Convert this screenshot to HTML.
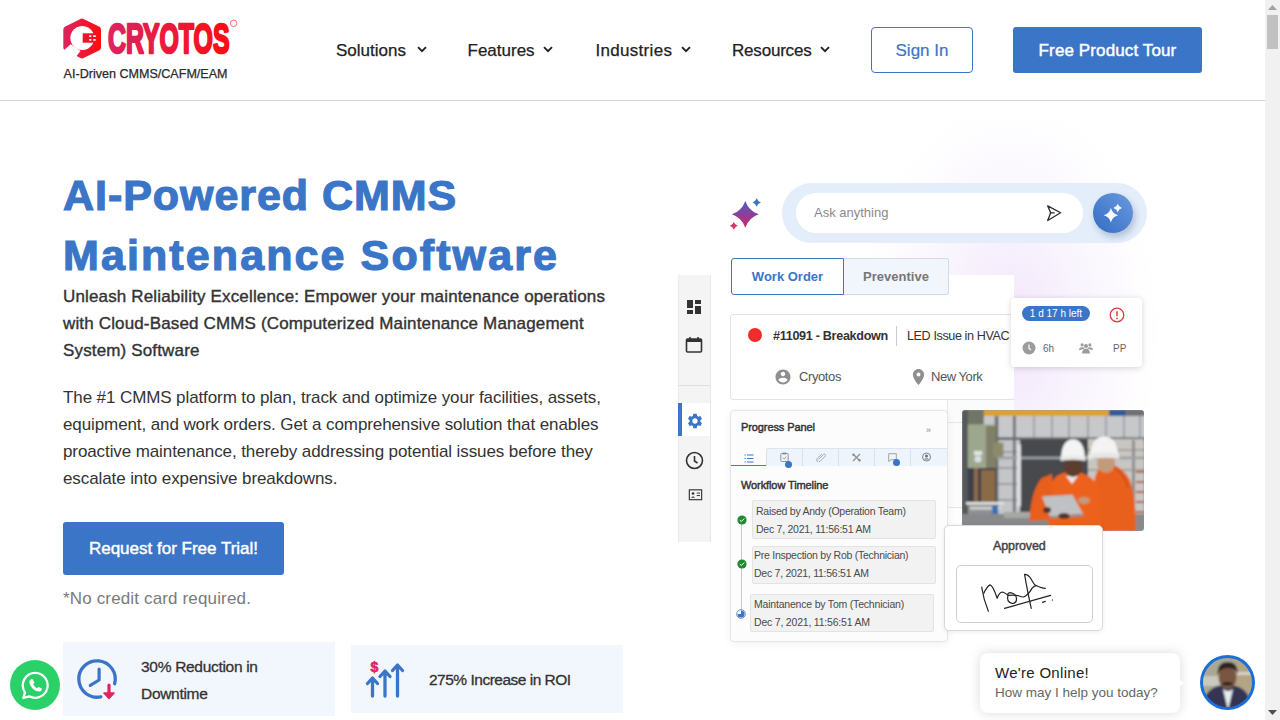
<!DOCTYPE html>
<html><head><meta charset="utf-8">
<style>
*{margin:0;padding:0;box-sizing:border-box}
html,body{width:1280px;height:720px;overflow:hidden;background:#fff;font-family:"Liberation Sans",sans-serif;color:#222}
.a{position:absolute;white-space:nowrap}
#hdr{position:absolute;left:0;top:0;width:1265px;height:101px;border-bottom:1px solid #d4d4d4;background:#fff}
.nav{position:absolute;top:40px;font-size:17px;color:#222;line-height:20px;-webkit-text-stroke:0.25px #222}
.chev{display:inline-block;width:7px;height:7px;border-right:2px solid #333;border-bottom:2px solid #333;transform:rotate(45deg);margin-left:11px;position:relative;top:-4px}
.sb{position:absolute;left:1265px;top:0;width:15px;height:720px;background:#f1f1f1}
</style></head><body>
<div id="hdr">
  <!-- logo -->
  <svg class="a" style="left:58px;top:14px" width="190" height="70" viewBox="0 0 190 70">
    <defs><linearGradient id="lg" x1="0" x2="1"><stop offset="0" stop-color="#dd2461"/><stop offset="1" stop-color="#fb0d12"/></linearGradient>
    <linearGradient id="lg2" gradientUnits="userSpaceOnUse" x1="49" x2="172"><stop offset="0" stop-color="#dd2461"/><stop offset="1" stop-color="#fb0d12"/></linearGradient></defs>
    <path fill="url(#lg)" fill-rule="evenodd" d="M22 5.2 Q24 4 26 5.2 L41.5 12.8 Q43 13.7 43 15.5 L43 33.5 Q43 35.3 41.5 36.2 L26 43.8 Q24 45 22 43.8 L6.8 36.2 Q5.3 35.3 5.3 33.5 L5.3 15.5 Q5.3 13.7 6.8 12.8 Z M24.3 12 A12 12 0 1 0 24.31 12 Z"/>
    <path d="M5 37 L12.7 30.2 L22.5 37 L17.5 43.5 Z" fill="#fff"/>
    <rect x="24.7" y="19.3" width="13.6" height="9.4" fill="#f2112a"/>
    <path d="M31.3 21.3h2v1.7h-2zM35.3 21.3h2.4v1.7h-2.4zM31.3 25h2v1.7h-2zM35.3 25h2.4v1.7h-2.4z" fill="#fff"/>
    <text x="50" y="39.2" font-family="Liberation Sans" font-weight="bold" font-size="43" fill="url(#lg2)" stroke="url(#lg2)" stroke-width="2.6" stroke-linejoin="round" textLength="121.5" lengthAdjust="spacingAndGlyphs">CRYOTOS</text>
    <circle cx="175.6" cy="9.3" r="3.2" fill="none" stroke="#f44" stroke-width="0.8"/>
    <text x="5.6" y="63.5" font-family="Liberation Sans" font-size="12.3" fill="#2a2a2a" stroke="#2a2a2a" stroke-width="0.25" textLength="164" lengthAdjust="spacingAndGlyphs">AI-Driven CMMS/CAFM/EAM</text>
  </svg>
  <div class="nav" style="left:336px;top:41px;letter-spacing:0px">Solutions</div>
  <svg class="a" style="left:416.5px;top:46px" width="10" height="7" viewBox="0 0 10 7"><path d="M1 1.2 L5 5.2 L9 1.2" fill="none" stroke="#222" stroke-width="1.9"/></svg>
  <div class="nav" style="left:467.5px;top:41px;letter-spacing:0px">Features</div>
  <svg class="a" style="left:542.5px;top:46px" width="10" height="7" viewBox="0 0 10 7"><path d="M1 1.2 L5 5.2 L9 1.2" fill="none" stroke="#222" stroke-width="1.9"/></svg>
  <div class="nav" style="left:595.5px;top:41px;letter-spacing:0.3px">Industries</div>
  <svg class="a" style="left:681px;top:46px" width="10" height="7" viewBox="0 0 10 7"><path d="M1 1.2 L5 5.2 L9 1.2" fill="none" stroke="#222" stroke-width="1.9"/></svg>
  <div class="nav" style="left:732px;top:41px;letter-spacing:-0.2px">Resources</div>
  <svg class="a" style="left:820px;top:46px" width="10" height="7" viewBox="0 0 10 7"><path d="M1 1.2 L5 5.2 L9 1.2" fill="none" stroke="#222" stroke-width="1.9"/></svg>
    <div class="a" style="left:871px;top:27px;width:102px;height:46px;border:1px solid #3b75c7;border-radius:4px;color:#3b75c7;font-size:17px;text-align:center;line-height:46px;-webkit-text-stroke:0.2px #3b75c7">Sign In</div>
  <div class="a" style="left:1013px;top:27px;width:189px;height:46px;background:#3b75c7;border-radius:3px;color:#fff;font-size:17px;text-align:center;line-height:48px;letter-spacing:0.12px;-webkit-text-stroke:0.45px #fff">Free Product Tour</div>
</div>

<!-- hero left -->
<div class="a" style="left:63px;top:165px;font-size:43px;font-weight:bold;color:#3b75c7;line-height:60px;-webkit-text-stroke:1.2px #3b75c7"><span style="letter-spacing:0.95px">AI-Powered CMMS</span><br><span style="letter-spacing:2.1px">Maintenance Software</span></div>
<div class="a" style="left:63px;top:283px;font-size:17px;font-weight:normal;color:#333;line-height:27px;letter-spacing:0.15px;-webkit-text-stroke:0.38px #333">Unleash Reliability Excellence: Empower your maintenance operations<br>with Cloud-Based CMMS (Computerized Maintenance Management<br>System) Software</div>
<div class="a" style="left:63px;top:384px;font-size:17px;color:#333;line-height:27px;letter-spacing:-0.1px">The #1 CMMS platform to plan, track and optimize your facilities, assets,<br>equipment, and work orders. Get a comprehensive solution that enables<br>proactive maintenance, thereby addressing potential issues before they<br>escalate into expensive breakdowns.</div>
<div class="a" style="left:63px;top:522px;width:221px;height:53px;background:#3b75c7;border-radius:3px;color:#fff;font-size:17px;text-align:center;line-height:53px;-webkit-text-stroke:0.45px #fff">Request for Free Trial!</div>
<div class="a" style="left:63px;top:589px;font-size:17px;color:#7a7a7a;line-height:20px;letter-spacing:0.15px">*No credit card required.</div>


<!-- illustration -->
<div class="a" style="left:820px;top:120px;width:380px;height:460px;background:radial-gradient(ellipse 150px 230px at 50% 46%, rgba(240,224,250,0.85) 0%, rgba(244,236,252,0.55) 50%, rgba(255,255,255,0) 100%)"></div>
<!-- sparkle -->
<svg class="a" style="left:727px;top:195px" width="38" height="38" viewBox="0 0 38 38">
  <defs><linearGradient id="sg" x1="0" y1="0" x2="0" y2="1"><stop offset="0" stop-color="#4d5cc0"/><stop offset="0.5" stop-color="#8a3f9c"/><stop offset="1" stop-color="#d5285f"/></linearGradient></defs>
  <path d="M18.3 5.9 Q21.784000000000002 15.816 31.700000000000003 19.3 Q21.784000000000002 22.784000000000002 18.3 32.7 Q14.816 22.784000000000002 4.9 19.3 Q14.816 15.816 18.3 5.9Z" fill="url(#sg)"/>
  <path d="M29.7 3.3 Q30.791999999999998 6.4079999999999995 33.9 7.5 Q30.791999999999998 8.592 29.7 11.7 Q28.608 8.592 25.5 7.5 Q28.608 6.4079999999999995 29.7 3.3Z" fill="#3f73c8"/>
  <path d="M6.8 26.900000000000002 Q7.814 29.786 10.7 30.8 Q7.814 31.814 6.8 34.7 Q5.786 31.814 2.9 30.8 Q5.786 29.786 6.8 26.900000000000002Z" fill="#d8336a"/>
</svg>
<!-- ask pill -->
<div class="a" style="left:782px;top:183px;width:365px;height:60px;border-radius:30px;background:#e4eefb"></div>
<div class="a" style="left:796px;top:193px;width:287px;height:40px;border-radius:20px;background:#fff"></div>
<div class="a" style="left:814px;top:205px;font-size:13px;color:#8a8a8a;line-height:16px">Ask anything</div>
<svg class="a" style="left:1044px;top:204px" width="19" height="18" viewBox="0 0 19 18"><path d="M3.7 1.9 L16.6 8.8 L3.7 16.5 L6.7 8.8 Z M6.7 8.8 L10.2 8.8" fill="none" stroke="#2a2a2a" stroke-width="1.3" stroke-linejoin="round" stroke-linecap="round"/></svg>
<div class="a" style="left:1093px;top:193px;width:40px;height:40px;border-radius:50%;background:linear-gradient(45deg,#356cc2,#6a9ae0);box-shadow:2px 4px 7px rgba(40,60,120,.28)"></div>
<svg class="a" style="left:1093px;top:193px" width="40" height="40" viewBox="0 0 40 40">
  <path d="M17.9 15.100000000000001 Q19.483999999999998 20.716 25.099999999999998 22.3 Q19.483999999999998 23.884 17.9 29.5 Q16.316 23.884 10.7 22.3 Q16.316 20.716 17.9 15.100000000000001Z" fill="#fff"/>
  <path d="M24.7 10.8 Q25.624 14.076 28.9 15 Q25.624 15.924 24.7 19.2 Q23.776 15.924 20.5 15 Q23.776 14.076 24.7 10.8Z" fill="#fff"/>
</svg>

<!-- sidebar -->
<div class="a" style="left:678px;top:275px;width:33px;height:267px;background:#f4f4f4;border-right:1px solid #e6e6e6;border-left:1px solid #ececec"></div>
<div class="a" style="left:678px;top:385px;width:32px;height:1px;background:#dedede"></div>
<div class="a" style="left:678px;top:403px;width:32px;height:33px;background:#fff"></div>
<div class="a" style="left:678px;top:403px;width:4px;height:33px;background:#3b75c7"></div>
<svg class="a" style="left:686px;top:299px" width="16" height="16" viewBox="0 0 16 16"><path d="M1 1h6v8H1zM9 1h6v4H9zM9 7h6v8H9zM1 11h6v4H1z" fill="#333"/></svg>
<svg class="a" style="left:685px;top:336px" width="18" height="18" viewBox="0 0 18 18"><rect x="1.5" y="3" width="15" height="13" rx="1" fill="none" stroke="#333" stroke-width="1.6"/><rect x="1.5" y="3" width="15" height="3" fill="#333"/><path d="M5 1v3M13 1v3" stroke="#333" stroke-width="1.6"/></svg>
<svg class="a" style="left:686px;top:412px" width="18" height="18" viewBox="0 0 24 24"><path fill="#3b75c7" d="M19.14 12.94c.04-.3.06-.61.06-.94 0-.32-.02-.64-.07-.94l2.03-1.58a.49.49 0 0 0 .12-.61l-1.92-3.32a.488.488 0 0 0-.59-.22l-2.39.96c-.5-.38-1.03-.7-1.62-.94l-.36-2.54a.484.484 0 0 0-.48-.41h-3.84c-.24 0-.43.17-.47.41l-.36 2.54c-.59.24-1.13.57-1.62.94l-2.39-.96c-.22-.08-.47 0-.59.22L2.74 8.87c-.12.21-.08.47.12.61l2.03 1.58c-.05.3-.09.63-.09.94s.02.64.07.94l-2.03 1.58a.49.49 0 0 0-.12.61l1.92 3.32c.12.22.37.29.59.22l2.39-.96c.5.38 1.03.7 1.62.94l.36 2.54c.05.24.24.41.48.41h3.84c.24 0 .44-.17.47-.41l.36-2.54c.59-.24 1.13-.56 1.62-.94l2.39.96c.22.08.47 0 .59-.22l1.92-3.32c.12-.22.07-.47-.12-.61l-2.01-1.58zM12 15.6c-1.98 0-3.6-1.62-3.6-3.6s1.62-3.6 3.6-3.6 3.6 1.62 3.6 3.6-1.62 3.6-3.6 3.6z"/></svg>
<svg class="a" style="left:685px;top:451px" width="19" height="19" viewBox="0 0 19 19"><circle cx="9.5" cy="9.5" r="8" fill="none" stroke="#333" stroke-width="1.6"/><path d="M9.5 5v5l3 2" fill="none" stroke="#333" stroke-width="1.6"/></svg>
<svg class="a" style="left:688px;top:489px" width="15" height="11.5" viewBox="0 0 17 14"><rect x="1" y="1" width="15" height="12" fill="none" stroke="#333" stroke-width="1.4"/><circle cx="5.5" cy="5.5" r="1.6" fill="#333"/><path d="M3 10.5q2.5-3 5 0z" fill="#333"/><path d="M10 5h4M10 8h4" stroke="#333" stroke-width="1.2"/></svg>

<!-- white panel behind -->
<div class="a" style="left:711px;top:275px;width:303px;height:140px;background:#fff"></div>
<!-- tabs -->
<div class="a" style="left:731px;top:258px;width:113px;height:37px;border:1px solid #3b75c7;border-radius:3px 0 0 3px;background:#fff;color:#3b75c7;font-size:13px;font-weight:bold;text-align:center;line-height:35px">Work Order</div>
<div class="a" style="left:844px;top:258px;width:105px;height:37px;border:1px solid #d3dbe7;border-left:none;border-radius:0 3px 3px 0;background:#f1f6fd;color:#777;font-size:13px;font-weight:bold;text-align:center;line-height:35px">Preventive</div>
<!-- work order card -->
<div class="a" style="left:730px;top:314px;width:284px;height:86px;border:1px solid #e3e3e3;border-right:none;border-radius:4px 0 0 4px;background:#fff"></div>
<div class="a" style="left:748px;top:328px;width:14px;height:14px;border-radius:50%;background:#f02b2b"></div>
<div class="a" style="left:773px;top:328px;font-size:12.6px;font-weight:bold;color:#333;line-height:16px;letter-spacing:-0.3px">#11091 - Breakdown</div>
<div class="a" style="left:896px;top:326px;width:1px;height:20px;background:#ccc"></div>
<div class="a" style="left:907px;top:328px;font-size:12.6px;color:#333;line-height:16px;letter-spacing:-0.4px">LED Issue in HVAC</div>
<svg class="a" style="left:774px;top:368px" width="18" height="18" viewBox="0 0 24 24"><path fill="#8f8f8f" d="M12 2C6.48 2 2 6.48 2 12s4.48 10 10 10 10-4.48 10-10S17.52 2 12 2zm0 3c1.66 0 3 1.34 3 3s-1.34 3-3 3-3-1.34-3-3 1.34-3 3-3zm0 14.2c-2.5 0-4.71-1.28-6-3.22.03-1.99 4-3.08 6-3.08 1.99 0 5.97 1.09 6 3.08-1.29 1.94-3.5 3.22-6 3.22z"/></svg>
<div class="a" style="left:799px;top:369px;font-size:13px;color:#555;line-height:16px;letter-spacing:-0.4px">Cryotos</div>
<svg class="a" style="left:911px;top:368px" width="15" height="18" viewBox="0 0 24 28"><path fill="#8f8f8f" d="M12 1C7.03 1 3 5.03 3 10c0 6.75 9 17 9 17s9-10.25 9-17c0-4.97-4.03-9-9-9zm0 12.2a3.2 3.2 0 1 1 0-6.4 3.2 3.2 0 0 1 0 6.4z"/></svg>
<div class="a" style="left:931px;top:369px;font-size:13px;color:#555;line-height:16px;letter-spacing:-0.45px">New York</div>

<!-- tooltip -->
<div class="a" style="left:1011px;top:298px;width:131px;height:69px;background:#fff;border-radius:4px;box-shadow:0 1px 6px rgba(0,0,0,.16)"></div>
<div class="a" style="left:1022px;top:306px;width:68px;height:15px;border-radius:8px;background:#3b75c7;color:#fff;font-size:10px;text-align:center;line-height:15px">1 d 17 h left</div>
<svg class="a" style="left:1109px;top:307px" width="16" height="16" viewBox="0 0 16 16"><circle cx="8" cy="8" r="6.8" fill="none" stroke="#e23a3a" stroke-width="1.3"/><path d="M8 4.2v5" stroke="#e23a3a" stroke-width="1.5"/><circle cx="8" cy="11.3" r=".9" fill="#e23a3a"/></svg>
<svg class="a" style="left:1022px;top:341px" width="14" height="14" viewBox="0 0 14 14"><circle cx="7" cy="7" r="6.5" fill="#9c9c9c"/><path d="M7 3.5v4l2 1.5" stroke="#fff" stroke-width="1.2" fill="none"/></svg>
<div class="a" style="left:1043px;top:343px;font-size:10px;color:#666;line-height:12px">6h</div>
<svg class="a" style="left:1079px;top:341px" width="14" height="14" viewBox="0 0 18 14"><circle cx="4" cy="3" r="2" fill="#9c9c9c"/><circle cx="14" cy="3" r="2" fill="#9c9c9c"/><circle cx="9" cy="4.5" r="2.6" fill="#9c9c9c"/><path d="M0 10q0-4 4-4t3 2zM18 10q0-4-4-4t-3 2zM4 14q0-6 5-6t5 6z" fill="#9c9c9c"/></svg>
<div class="a" style="left:1113px;top:343px;font-size:10px;color:#666;line-height:12px">PP</div>

<!-- progress panel -->
<div class="a" style="left:947px;top:400px;width:67px;height:108px;background:#fbfbfb;border-left:1px solid #e8e8e8;border-bottom:1px solid #e4e4e4"></div>
<div class="a" style="left:948px;top:422px;width:14px;height:1px;background:#e6e6e6"></div>
<div class="a" style="left:730px;top:410px;width:218px;height:232px;background:#fdfcfd;border:1px solid #e6e6e6;border-radius:4px;box-shadow:0 2px 8px rgba(0,0,0,.06)"></div>
<div class="a" style="left:741px;top:421px;font-size:11px;font-weight:normal;color:#333;line-height:13px;letter-spacing:-0.1px;-webkit-text-stroke:0.45px #333">Progress Panel</div>
<div class="a" style="left:926px;top:424px;font-size:9px;color:#888;line-height:12px">&#187;</div>
<div class="a" style="left:731px;top:448px;width:216px;height:18px;background:#eef4fb;border-top:1px solid #dbe5f2"></div>
<div class="a" style="left:731px;top:448px;width:36px;height:18px;background:#fdfcfd;border-bottom:1.5px solid #4a7bbd"></div>
<div class="a" style="left:766px;top:449px;width:1px;height:17px;background:#d8e0ea"></div>
<div class="a" style="left:802px;top:449px;width:1px;height:17px;background:#d8e0ea"></div>
<div class="a" style="left:838px;top:449px;width:1px;height:17px;background:#d8e0ea"></div>
<div class="a" style="left:874px;top:449px;width:1px;height:17px;background:#d8e0ea"></div>
<div class="a" style="left:910px;top:449px;width:1px;height:17px;background:#d8e0ea"></div>
<svg class="a" style="left:744px;top:454px" width="10" height="9" viewBox="0 0 10 9"><path d="M0.5 1h1.3M0.5 4.5h1.3M0.5 8h1.3M3 1h6.5M3 4.5h6.5M3 8h6.5" stroke="#3b75c7" stroke-width="1.1"/></svg>
<svg class="a" style="left:780px;top:452px" width="9" height="10" viewBox="0 0 9 10"><rect x="0.8" y="1.5" width="7.4" height="8" rx="0.8" fill="none" stroke="#8a8a8a" stroke-width="0.9"/><rect x="2.7" y="0.6" width="3.6" height="1.8" fill="#8a8a8a"/><path d="M2.8 5.8l1.3 1.2 2.2-2.4" stroke="#8a8a8a" fill="none" stroke-width="0.8"/></svg>
<div class="a" style="left:785px;top:461px;width:7px;height:7px;border-radius:50%;background:#3b75c7"></div>
<svg class="a" style="left:816px;top:452px" width="10" height="10" viewBox="0 0 10 10"><path d="M2.5 7.5l5-5a1.2 1.2 0 0 1 1.7 1.7l-5.3 5.3a2 2 0 0 1-2.8-2.8l4.5-4.5" stroke="#a0a0a0" fill="none" stroke-width="0.9"/></svg>
<svg class="a" style="left:852px;top:453px" width="9" height="9" viewBox="0 0 9 9"><path d="M1 1l7 7M8 1L1 8" stroke="#8f8f8f" stroke-width="1.2"/><circle cx="1.5" cy="1.8" r="1.2" fill="#8f8f8f"/><circle cx="7.5" cy="7.3" r="1.2" fill="#8f8f8f"/></svg>
<svg class="a" style="left:888px;top:453px" width="9" height="9" viewBox="0 0 9 9"><path d="M0.7 0.7h7.6v6H3l-2.3 2z" fill="none" stroke="#9a9a9a" stroke-width="0.9"/></svg>
<div class="a" style="left:893px;top:459px;width:7px;height:7px;border-radius:50%;background:#3b75c7"></div>
<svg class="a" style="left:922px;top:452px" width="9" height="10" viewBox="0 0 9 10"><circle cx="4.5" cy="5" r="4" fill="none" stroke="#777" stroke-width="0.9"/><circle cx="4.5" cy="4" r="1.6" fill="#777"/><path d="M1.8 7.6q2.7-2.6 5.4 0z" fill="#777"/></svg>
<div class="a" style="left:741px;top:479px;font-size:11px;font-weight:normal;color:#333;line-height:13px;letter-spacing:-0.1px;-webkit-text-stroke:0.45px #333">Workflow Timeline</div>
<div class="a" style="left:741px;top:520px;width:1px;height:92px;background:#c8c8c8"></div>
<div class="a" style="left:752px;top:500px;width:184px;height:39px;background:#f2f2f2;border:1px solid #e3e3e3;border-radius:2px"></div>
<div class="a" style="left:756px;top:501.5px;font-size:10.5px;color:#4a4a4a;line-height:18px;letter-spacing:-0.25px">Raised by Andy (Operation Team)<br>Dec 7, 2021, 11:56:51 AM</div>
<div class="a" style="left:752px;top:546px;width:184px;height:38px;background:#f2f2f2;border:1px solid #e3e3e3;border-radius:2px"></div>
<div class="a" style="left:754px;top:546px;font-size:10.5px;color:#4a4a4a;line-height:18px;letter-spacing:-0.25px">Pre Inspection by Rob (Technician)<br>Dec 7, 2021, 11:56:51 AM</div>
<div class="a" style="left:750px;top:594px;width:184px;height:38px;background:#f2f2f2;border:1px solid #e3e3e3;border-radius:2px"></div>
<div class="a" style="left:754px;top:594.5px;font-size:10.5px;color:#4a4a4a;line-height:18px;letter-spacing:-0.2px">Maintanence by Tom (Technician)<br>Dec 7, 2021, 11:56:51 AM</div>
<svg class="a" style="left:737px;top:515px" width="10" height="10" viewBox="0 0 10 10"><circle cx="5" cy="5" r="4.6" fill="#1f8a2f"/><path d="M2.8 5.1l1.5 1.4 3-3" stroke="#fff" stroke-width="1" fill="none"/></svg>
<svg class="a" style="left:737px;top:559px" width="10" height="10" viewBox="0 0 10 10"><circle cx="5" cy="5" r="4.6" fill="#1f8a2f"/><path d="M2.8 5.1l1.5 1.4 3-3" stroke="#fff" stroke-width="1" fill="none"/></svg>
<svg class="a" style="left:736px;top:609px" width="10" height="10" viewBox="0 0 10 10"><circle cx="5" cy="5" r="4.3" fill="#fff" stroke="#3b75c7" stroke-width="0.8"/><path d="M5 5V1.5A3.5 3.5 0 1 1 1.5 5z" fill="#3b75c7"/></svg>

<!-- photo -->
<svg class="a" style="left:962px;top:410px" width="182" height="121" viewBox="0 0 182 121">
  <defs><clipPath id="pc"><rect width="182" height="121" rx="3"/></clipPath>
  <filter id="bl" filterUnits="userSpaceOnUse" x="-5" y="-5" width="192" height="131"><feGaussianBlur stdDeviation="0.8"/></filter></defs>
  <g clip-path="url(#pc)"><g filter="url(#bl)">
  <rect x="-2" y="-2" width="186" height="125" fill="#8e9195"/>
  <!-- corrugated wall -->
  <rect x="20" y="5.8" width="164" height="23" fill="#c6c8ca"/>
  <path d="M33 6v23M53 6v23M72 6v23M90 6v23M107 6v23M126 6v23M144 6v23M162 6v23M178 6v23" stroke="#9fa3a6" stroke-width="1.8"/>
  <rect x="20" y="27.5" width="164" height="5" fill="#5a5e62"/>
  <!-- left background structure -->
  <rect x="34" y="30" width="24" height="76" fill="#c3c5c7"/>
  <path d="M34 42h24M34 58h24M34 74h24M34 90h24" stroke="#8d9094" stroke-width="1.5"/>
  <rect x="33.6" y="6" width="2.6" height="100" fill="#5f6367"/>
  <rect x="51" y="6" width="2.5" height="100" fill="#6a6e72"/>
  <!-- dark center -->
  <rect x="58" y="30" width="70" height="76" fill="#46494d"/>
  <!-- right light zone -->
  <rect x="126" y="29" width="56" height="92" fill="#c9c6c1"/>
  <path d="M126 40h56M126 60h56" stroke="#9a9894" stroke-width="1.5"/>
  <rect x="170" y="30" width="3" height="90" fill="#8c9094"/>
  <path d="M174 62h8M174 72h8M174 82h8M174 92h8M174 102h8" stroke="#b4544a" stroke-width="2"/>
  <!-- horizontal bar -->
  <rect x="35" y="46.6" width="147" height="2.6" fill="#9aa0a6"/>
  <!-- white pole -->
  <rect x="55.3" y="34.5" width="3.5" height="62" fill="#e2e3e4"/>
  <!-- beam -->
  <rect x="0" y="0" width="182" height="6" fill="#dca22e"/>
  <rect x="147" y="0" width="17.4" height="6" fill="#2d5a96"/>
  <rect x="164.4" y="0" width="18" height="6" fill="#6d7176"/>
  <!-- machine -->
  <rect x="0" y="0" width="6" height="106" fill="#54585a"/>
  <rect x="5.8" y="0" width="16" height="14.5" fill="#6f7468"/>
  <rect x="5.8" y="14.5" width="27" height="43.5" fill="#9ca78e"/>
  <rect x="24" y="16" width="10.5" height="42" fill="#7f8066"/>
  <rect x="31" y="32.7" width="10.4" height="14" fill="#8d8a6a"/>
  <circle cx="16" cy="49" r="3.5" fill="#d8dee6"/>
  <rect x="12" y="41" width="8" height="4" fill="#e6e6dc"/>
  <rect x="5.8" y="58" width="28" height="34" fill="#3d4048"/>
  <rect x="12" y="58" width="4" height="34" fill="#8c6c48"/>
  <rect x="19" y="60" width="14" height="32" fill="#8a6a46"/>
  <rect x="4" y="92" width="38" height="2.6" fill="#e2e2e2"/>
  <rect x="8" y="97" width="32" height="2.5" fill="#d6d6d6"/>
  <rect x="30" y="95" width="6" height="9" fill="#3d6fae"/>
  <rect x="0" y="104" width="182" height="17" fill="#87898a"/>
  <rect x="42" y="102" width="26" height="6" fill="#a7a8a6"/>
  <!-- man 2 -->
  <path d="M131 121 L132.3 72 Q134 56 146 53 Q160 56 168 70 Q174 86 174 121Z" fill="#e8601e"/>
  <path d="M150 56 Q162 62 166 78" stroke="#c94f15" stroke-width="1.5" fill="none"/>
  <ellipse cx="144" cy="53" rx="9" ry="10" fill="#c49a7c"/>
  <path d="M128 46 Q129 27 142 26.6 Q155 27 156 44 Z" fill="#f3f3f3"/>
  <path d="M125.3 45 Q140 40 157.4 44 L157 49 Q140 46 126 50Z" fill="#e6e6e6"/>
  <!-- man 1 -->
  <path d="M86 121 L87 78 Q90 66 104 62 L116 62 Q132 66 137 78 L139 121Z" fill="#ec621f"/>
  <path d="M104 66 L110 74 L116 66" fill="#e8e8e8"/>
  <ellipse cx="111" cy="57" rx="9" ry="10" fill="#5c3d2e"/>
  <path d="M99 48 Q100 29.3 111 29.3 Q122 29.5 123 48 Z" fill="#f4f4f4"/>
  <path d="M98.4 47 Q111 44 123.6 47 L123.4 51 Q111 48.5 98.6 51Z" fill="#e8e8e8"/>
  <!-- man1 arm left (from left image) -->
  <path d="M67.4 111 Q69 80 80 68 L90 64 L92 110Z" fill="#e85f1d"/>
  <!-- laptop -->
  <path d="M80 86.5 L110.5 84.8 L121 104 L88 106.5 Z" fill="#bfc1c3"/>
  <path d="M88 106.5 L121 104 L122 106 L89 108.5Z" fill="#8b8e91"/>
  <ellipse cx="102" cy="106" rx="6" ry="3" fill="#4e3427"/>
  <ellipse cx="122" cy="90.5" rx="6" ry="3.5" fill="#c49a7c"/>
  <ellipse cx="85" cy="100" rx="4" ry="3" fill="#4e3427"/>
  </g></g>
</svg>

<!-- approved card -->
<div class="a" style="left:944px;top:525px;width:159px;height:106px;background:#fff;border:1px solid #d9d9d9;border-radius:5px;box-shadow:0 1px 4px rgba(0,0,0,.08)"></div>
<div class="a" style="left:993px;top:539px;font-size:12.5px;font-weight:normal;color:#444;line-height:14px;letter-spacing:-0.1px;-webkit-text-stroke:0.45px #444">Approved</div>
<div class="a" style="left:956px;top:565px;width:137px;height:58px;border:1px solid #cfcfcf;border-radius:5px"></div>
<svg class="a" style="left:975px;top:568px" width="90" height="50" viewBox="0 0 1280 711">
  <g fill="none" stroke="#222" stroke-width="17" stroke-linecap="round" stroke-linejoin="round">
  <path d="M95 270 Q120 450 190 615"/>
  <path d="M125 360 Q170 260 215 240 Q255 250 315 430 Q350 330 400 345 Q440 360 470 390 Q560 380 620 395 Q680 420 700 410 Q760 380 810 290 Q840 250 870 250 Q950 290 1000 290"/>
  <path d="M470 390 Q440 480 530 505 Q595 500 590 430 Q580 360 500 350 Q455 360 470 390"/>
  <path d="M800 575 Q740 300 705 90 Q760 90 800 160 Q840 240 870 250"/>
  <path d="M420 575 L1075 390"/>
  <path d="M960 488 L1000 475"/>
  <path d="M1100 455 L1102 456"/>
  </g>
</svg>

<!-- stats -->
<div class="a" style="left:63px;top:642px;width:272px;height:74px;background:#f2f7fd"></div>
<svg class="a" style="left:74px;top:656px" width="46" height="46" viewBox="0 0 46 46">
  <path d="M40.6 27.7 A18.2 18.2 0 1 0 26.8 40.8" fill="none" stroke="#3b75c7" stroke-width="3.3" stroke-linecap="round"/>
  <path d="M25.1 13 V24 L16.3 29.3" fill="none" stroke="#3b75c7" stroke-width="3.2" stroke-linecap="round" stroke-linejoin="round"/>
  <path d="M35 29 V38" stroke="#e0245e" stroke-width="3.2" stroke-linecap="round"/>
  <path d="M30 37 L40 37 L35 42.5 Z" fill="#e0245e" stroke="#e0245e" stroke-width="1.6" stroke-linejoin="round"/>
</svg>
<div class="a" style="left:141px;top:652.5px;font-size:15.5px;color:#333;line-height:27px;letter-spacing:-0.3px;-webkit-text-stroke:0.3px #333">30% Reduction in<br>Downtime</div>
<div class="a" style="left:351px;top:645px;width:272px;height:68px;background:#f2f7fd"></div>
<svg class="a" style="left:364px;top:655px" width="42" height="46" viewBox="0 0 42 46">
  <path d="M8.5 41 V25 M3.5 28.5 L8.5 23 L13.5 28.5 M21 41 V18 M16 21.5 L21 16 L26 21.5 M33.5 41 V12 M28.5 15.5 L33.5 10 L38.5 15.5" fill="none" stroke="#3b75c7" stroke-width="3.3" stroke-linecap="round" stroke-linejoin="round"/>
  <text x="10.5" y="17" text-anchor="middle" font-family="Liberation Sans" font-weight="bold" font-size="14" fill="#e0245e" stroke="#e0245e" stroke-width="0.6">$</text>
</svg>
<div class="a" style="left:429px;top:669.6px;font-size:15.5px;color:#333;line-height:20px;letter-spacing:-0.5px;-webkit-text-stroke:0.3px #333">275% Increase in ROI</div>

<!-- whatsapp -->
<div class="a" style="left:10px;top:660px;width:50px;height:50px;border-radius:50%;background:#2ad068"></div>
<svg class="a" style="left:21px;top:671px" width="29" height="29" viewBox="0 0 29 29">
  <path d="M14.5 1.8 A12.5 12.5 0 1 1 8.2 25.3 L2.3 27 L4 21.3 A12.5 12.5 0 0 1 14.5 1.8Z" fill="none" stroke="#fff" stroke-width="2.3" stroke-linejoin="round"/>
  <path d="M10 8.3 Q11 7.6 11.7 8.3 L13.2 11.3 Q13.4 12 12.9 12.5 L12.2 13.3 Q13.3 15.9 16 17.2 L17 16.2 Q17.4 15.8 18 16.1 L20.6 17.5 Q21.2 17.9 20.9 18.7 Q20.1 20.6 18.2 20.6 Q14.5 20.4 11.5 17.4 Q8.6 14.3 8.3 11.2 Q8.3 9.3 10 8.3Z" fill="#fff"/>
</svg>

<!-- chat -->
<div class="a" style="left:980px;top:653px;width:200px;height:60px;background:#fff;border-radius:8px;box-shadow:0 0 12px rgba(0,0,0,.15)"></div>
<div class="a" style="left:1176px;top:677px;width:0;height:0;border-top:6px solid transparent;border-bottom:6px solid transparent;border-left:8px solid #fff"></div>
<div class="a" style="left:995px;top:664px;font-size:15px;color:#222;letter-spacing:0.3px">We're Online!</div>
<div class="a" style="left:995px;top:685px;font-size:13.5px;color:#666">How may I help you today?</div>
<div class="a" style="left:1200px;top:655px;width:55px;height:55px;border-radius:50%;background:#1a6fd6;overflow:hidden"></div>
<svg class="a" style="left:1203px;top:658px" width="49" height="49" viewBox="0 0 49 49">
  <defs><clipPath id="av"><circle cx="24.5" cy="24.5" r="24.5"/></clipPath>
  <filter id="avb" filterUnits="userSpaceOnUse" x="-3" y="-3" width="55" height="55"><feGaussianBlur stdDeviation="0.9"/></filter></defs>
  <g clip-path="url(#av)"><g filter="url(#avb)">
  <rect x="-3" y="-3" width="55" height="55" fill="#aaa792"/>
  <rect x="-3" y="18" width="22" height="10" fill="#c9c9bd"/>
  <rect x="32" y="-3" width="20" height="55" fill="#b3a486"/>
  <rect x="34" y="14" width="14" height="3" fill="#d8d4c4"/>
  <path d="M-2 52 Q0 34 14 28 L20 27 L29 27 L36 29 Q47 34 50 52Z" fill="#363652"/>
  <path d="M20 31 L25 52 L30 31 Q25 35 20 31Z" fill="#e6ecef"/>
  <ellipse cx="24.5" cy="19.5" rx="9" ry="11.5" fill="#7a5643"/>
  <path d="M14.5 17 Q14 4 25 4 Q35 4 34.5 16 Q33 10 25 10 Q17 10 14.5 17Z" fill="#2e2420"/>
  <path d="M18.5 25.5 Q24.5 22.5 30 25.5 Q29 28 24.5 27 Q20 28 18.5 25.5Z" fill="#1b1310"/>
  </g></g>
</svg>

<div class="sb">
  <div class="a" style="left:2px;top:15px;width:11px;height:34px;background:#c1c1c1"></div>
  <svg class="a" style="left:3px;top:5px" width="9" height="5" viewBox="0 0 9 5"><path d="M0 5L4.5 0L9 5Z" fill="#a3a3a3"/></svg>
  <svg class="a" style="left:3px;top:710px" width="9" height="5" viewBox="0 0 9 5"><path d="M0 0L4.5 5L9 0Z" fill="#505050"/></svg>
</div>
</body></html>
